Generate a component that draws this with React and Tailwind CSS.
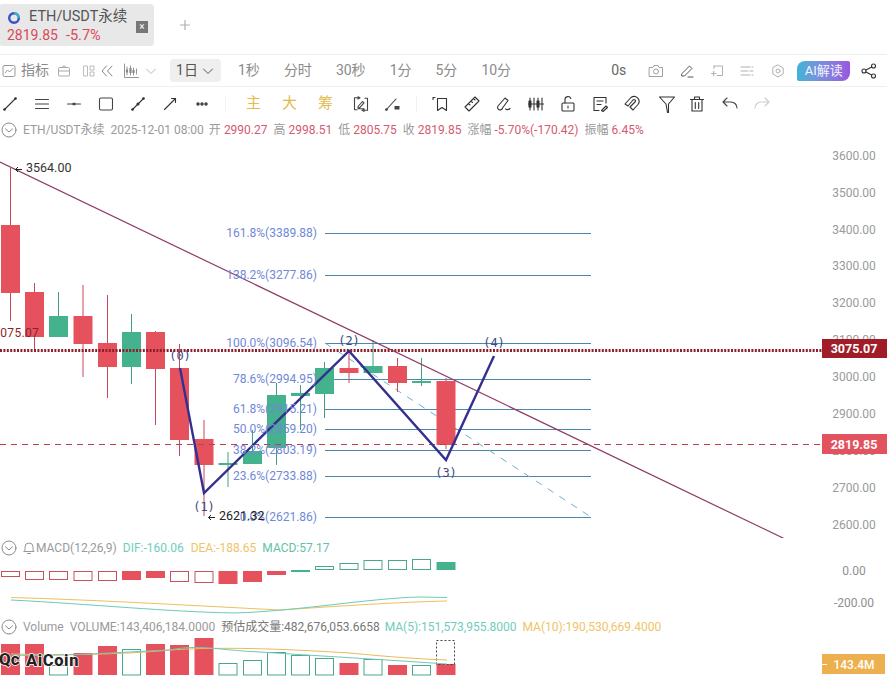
import React from "react";

const RED = "#e5525d";
const GREEN = "#44b28c";
const font = { fontFamily: "Roboto, 'Noto Sans CJK SC', sans-serif" };

const candles = [
  [10.5, 225, 293, 168, 321, "r"],
  [34.5, 292, 337, 283, 351, "r"],
  [58.5, 316, 337, 292, 337, "g"],
  [83, 316, 344, 285, 377, "r"],
  [107.5, 343, 367, 295, 398, "r"],
  [131.5, 332, 367, 314, 384, "g"],
  [155.5, 332, 369, 331, 425, "r"],
  [179.5, 368, 440, 344, 456, "r"],
  [204, 439, 465, 420, 516, "r"],
  [228, 463, 465, 452, 487, "g"],
  [252.5, 451, 464, 430, 464, "g"],
  [276.5, 395, 448, 383, 465, "g"],
  [300.5, 393, 396, 385, 430, "g"],
  [324.5, 368, 394, 362, 418, "g"],
  [349, 368, 373, 350, 383, "r"],
  [373, 366, 373, 340, 373, "g"],
  [397.5, 366, 383, 358, 392, "r"],
  [421.5, 381, 383, 358, 386, "g"],
  [446, 381, 445, 378, 449, "r"],
];

const fibs = [
  ["161.8%(3389.88)", 233],
  ["138.2%(3277.86)", 275],
  ["100.0%(3096.54)", 343],
  ["78.6%(2994.95)", 379],
  ["61.8%(2915.21)", 409],
  ["50.0%(2859.20)", 429],
  ["38.2%(2803.19)", 450],
  ["23.6%(2733.88)", 476],
  ["0.0%(2621.86)", 517],
];

const axis = [
  ["3600.00", 156], ["3500.00", 193], ["3400.00", 230], ["3300.00", 266], ["3200.00", 303],
  ["3100.00", 340], ["3000.00", 377], ["2900.00", 414], ["2800.00", 451], ["2700.00", 488], ["2600.00", 525],
];

const macd = [
  [571, 577, 0], [571, 580, 0], [571, 580, 0], [571, 581, 0], [571, 581, 0], [571, 580, 1], [571, 578, 1],
  [571, 582, 0], [571, 583, 0], [571, 584, 1], [571, 582, 1], [571, 575, 1], [570, 572, 1],
  [566, 570, 0], [563, 570, 0], [560, 570, 0], [560, 570, 0], [559, 570, 0], [562, 570, 1],
];

const vol = [
  [644, "r"], [644, "r"], [665, "g"], [653, "r"], [646, "r"], [649, "g"], [644, "r"], [645, "r"], [638, "r"],
  [663, "g"], [660, "g"], [652, "g"], [655, "g"], [658, "g"], [663, "r"], [659, "g"], [665, "r"], [665, "g"], [664, "r"],
];

const Ic = ({ children, w = 18, h = 18, vb = "0 0 18 18", color = "#444", sw = 1.1, className = "" }) => (
  <svg width={w} height={h} viewBox={vb} fill="none" stroke={color} strokeWidth={sw} strokeLinecap="round" strokeLinejoin="round" className={`shrink-0 ${className}`}>
    {children}
  </svg>
);

const Chevron = ({ color = "#aaa" }) => (
  <Ic w={14} h={14} vb="0 0 14 14" color={color} sw={1}><path d="M2.5 5 7 9.5 11.5 5" /></Ic>
);

const Collapse = () => (
  <Ic w={16} h={16} vb="0 0 16 16" color="#8a8a8a" sw={1}>
    <circle cx="8" cy="8" r="7" />
    <path d="M4.5 6.8 8 10l3.5-3.2" />
  </Ic>
);

function MainChart() {
  return (
    <svg width="887" height="398" viewBox="0 140 887 398" className="block" style={font}>
      {fibs.map(([t, y]) => (
        <line key={t} x1="325" x2="591" y1={y + 0.5} y2={y + 0.5} stroke="#4a86b4" strokeWidth="1" />
      ))}
      <line x1="325" y1="343" x2="591" y2="517" stroke="#6fb0c6" strokeWidth="1" strokeDasharray="7 7" />
      {candles.map(([x, t, b, hi, lo, c], i) => {
        const col = c === "r" ? RED : GREEN;
        const wick = c === "r" ? "#c9485a" : "#3f9f80";
        return (
          <g key={i}>
            <line x1={x} x2={x} y1={hi} y2={lo} stroke={wick} strokeWidth="1" />
            <rect x={x - 9.5} y={t} width="19" height={b - t} fill={col} />
          </g>
        );
      })}
      <line x1="0" x2="822" y1="444.5" y2="444.5" stroke="#b8404f" strokeWidth="1" strokeDasharray="6 5" />
      <line x1="0" x2="822" y1="350.5" y2="350.5" stroke="#8f1f2b" strokeWidth="3" strokeDasharray="2 1.4" />
      <line x1="0" y1="162" x2="785" y2="539" stroke="#8f3a66" strokeWidth="1.2" />
      <polyline points="180,368 204,493 349,351 446,460 494,356" fill="none" stroke="#34308f" strokeWidth="2.4" />
      {fibs.map(([t, y]) => (
        <text key={t} x="317" y={y + 4} textAnchor="end" fontSize="12" fill="#7088d8">{t}</text>
      ))}
      {[["(0)", 180, 360], ["(1)", 204, 511], ["(2)", 349, 345], ["(3)", 446, 477], ["(4)", 494, 347]].map(([t, x, y]) => (
        <text key={t} x={x} y={y} textAnchor="middle" fontSize="12" fill="#3d4a80" style={{ fontFamily: "'DejaVu Sans Mono', monospace" }}>{t}</text>
      ))}
      <text x="39" y="337" textAnchor="end" fontSize="12" fill="#8f1f2b" style={{ letterSpacing: "0.3px" }}>3075.07</text>
      <path d="M22 169.500H15.500M18 167l-2.500 2.500L18 172" fill="none" stroke="#222" strokeWidth="1" />
      <text x="26" y="172" fontSize="12.500" fill="#333">3564.00</text>
      <path d="M215 517.500H208.500M211 515l-2.500 2.500L211 520" fill="none" stroke="#222" strokeWidth="1" />
      <text x="219" y="520" fontSize="12.500" fill="#222">2621.32</text>
      {axis.map(([t, y]) => (
        <text key={t} x="854" y={y + 4} textAnchor="middle" fontSize="12" fill="#9a9a9a">{t}</text>
      ))}
      <rect x="822" y="339" width="65" height="19" fill="#a01c26" />
      <text x="854" y="353" textAnchor="middle" fontSize="12.500" fontWeight="700" fill="#fff">3075.07</text>
      <rect x="822" y="434" width="65" height="20" fill="#e2525f" />
      <text x="854" y="449" textAnchor="middle" fontSize="12.500" fontWeight="700" fill="#fff">2819.85</text>
    </svg>
  );
}

function MacdChart() {
  return (
    <svg width="887" height="60" viewBox="0 558 887 60" className="block" style={font}>
      {macd.map(([t, b, fill], i) => {
        const x = candles[i][0];
        const col = i < 12 ? "#c9505f" : "#4aa88a";
        const solid = i < 12 ? RED : GREEN;
        return fill ? (
          <rect key={i} x={x - 9.500} y={t} width="19" height={b - t} fill={solid} />
        ) : (
          <rect key={i} x={x - 9} y={t + 0.5} width="18" height={b - t - 1} fill="none" stroke={col} strokeWidth="1" />
        );
      })}
      <path d="M11 597.500C100 600 200 606 280 610C340 606 400 602 447 601" fill="none" stroke="#edc05e" strokeWidth="1" />
      <path d="M11 600C90 604 170 612 235 613C300 611 370 598 420 597L447 597.500" fill="none" stroke="#6ec9b8" strokeWidth="1" />
      <text x="854" y="575" textAnchor="middle" fontSize="12" fill="#8f8f8f">0.00</text>
      <text x="854" y="607" textAnchor="middle" fontSize="12" fill="#8f8f8f">-200.00</text>
    </svg>
  );
}

function VolChart() {
  return (
    <svg width="887" height="48" viewBox="0 636 887 48" className="block" style={font}>
      {vol.map(([t, c], i) => {
        const x = candles[i][0];
        return c === "r" ? (
          <rect key={i} x={x - 9.500} y={t} width="19" height={675 - t} fill={RED} />
        ) : (
          <rect key={i} x={x - 9} y={t + 0.5} width="18" height={674.500 - t} fill="none" stroke="#4aa88a" strokeWidth="1" />
        );
      })}
      <rect x="436.500" y="640.500" width="18" height="24" fill="none" stroke="#444" strokeWidth="1" strokeDasharray="2 2" />
      <path d="M11 654C60 655 120 655 170 650C230 646 300 650 350 653C390 657 420 659 447 660" fill="none" stroke="#edb85a" strokeWidth="1" />
      <path d="M11 655C60 657 120 652 170 650C200 644 215 650 260 652C320 656 390 660 447 664" fill="none" stroke="#6ec9b8" strokeWidth="1" />
      <g fontWeight="800" fill="#222" stroke="#fff" strokeWidth="1.500" style={{ paintOrder: "stroke" }}>
        <text x="-1" y="665" fontSize="17">Qc</text>
        <text x="26" y="666" fontSize="16.500" style={{ letterSpacing: "0.6px" }}>AiCoin</text>
      </g>
      <rect x="822" y="654" width="63" height="20" fill="#edb04e" />
      <line x1="822" x2="827" y1="664.500" y2="664.500" stroke="#fff" />
      <text x="854" y="669" textAnchor="middle" fontSize="12" fontWeight="500" fill="#fff">143.4M</text>
    </svg>
  );
}

export default function App() {
  return (
    <div className="w-[887px] h-[684px] overflow-hidden bg-white" style={font}>
      {/* tabs */}
      <div className="h-[55px] border-b border-[#efefef] flex items-start pt-[4px]">
        <div className="w-[154px] h-[42px] bg-[#e8e8e8] rounded-r-[4px] rounded-l-[2px] pl-[7px] pr-[6px] flex items-end justify-between pb-[1px]">
          <div className="flex flex-col h-full justify-between pt-[5px]">
            <div className="flex items-center gap-[8px] h-[18px]">
              <svg width="14" height="14" viewBox="0 0 14 14" fill="none" className="shrink-0">
                <circle cx="7" cy="7" r="4.800" stroke="#3a50c8" strokeWidth="2.400" />
                <path d="M7 2.200A4.800 4.800 0 0 1 11.800 7" stroke="#38b6c8" strokeWidth="2.400" />
              </svg>
              <span className="text-[14.500px] leading-none text-[#555] whitespace-nowrap">ETH/USDT永续</span>
            </div>
            <div className="flex gap-[8px] text-[14px] leading-[19px] text-[#d9495a] whitespace-nowrap">
              <span>2819.85</span>
              <span className="text-[14.500px]">-5.7%</span>
            </div>
          </div>
          <div className="w-[12px] h-[12px] mb-[12px] bg-[#777] flex items-center justify-center text-white text-[10px] leading-none">×</div>
        </div>
        <svg width="12" height="12" viewBox="0 0 12 12" className="ml-[25px] mt-[15px]" stroke="#b0b0b0" strokeWidth="1.200">
          <path d="M6 1v10M1 6h10" />
        </svg>
      </div>

      {/* toolbar 1 */}
      <div className="h-[32px] border-b border-[#f0f0f0] flex items-center text-[14px] text-[#8a8a8a] whitespace-nowrap">
        <Ic w={14} h={14} vb="0 0 14 14" color="#999" sw={1} className="ml-[2px]">
          <rect x="1" y="1.500" width="12" height="11" rx="1.500" />
          <path d="M3 9l2.500-3 2 2L11 4.500" />
        </Ic>
        <span className="ml-[5px] w-[27px]">指标</span>
        <Ic w={14} h={14} vb="0 0 14 14" color="#aaa" sw={1} className="ml-[9px]">
          <rect x="1.500" y="3.500" width="11" height="8.500" rx="1" /><path d="M1.500 7h11M5 3.500c0-2 4-2 4 0" />
        </Ic>
        <Ic w={12} h={14} vb="0 0 12 14" color="#bbb" sw={1} className="ml-[12px]">
          <rect x="1" y="2" width="3.500" height="10" /><rect x="7.500" y="2" width="3.500" height="4" /><rect x="7.500" y="8" width="3.500" height="4" />
        </Ic>
        <Ic w={14} h={14} vb="0 0 14 14" color="#888" sw={1} className="ml-[5px]">
          <path d="M6.500 2 2 7l4.500 5M12 2 7.500 7l4.500 5" />
        </Ic>
        <Ic w={16} h={16} vb="0 0 16 16" color="#888" sw={0.9} className="ml-[9px]">
          <path d="M1.500 1v13.500h14M4 4v8M7.500 3v9M10.500 5v7M13.500 6v5" />
          <path d="M4 6.500v3M7.500 5v5M10.500 7v3" strokeWidth="2.200" strokeLinecap="butt" />
        </Ic>
        <span className="ml-[5px]"><Chevron color="#bbb" /></span>
        <div className="ml-[12px] w-[51px] h-[23px] rounded-[4px] bg-[#efefef] flex items-center justify-center gap-[3px] text-[#555]">
          <span>1日</span><Chevron color="#555" />
        </div>
        <span className="ml-[17px]">1秒</span>
        <span className="ml-[24px]">分时</span>
        <span className="ml-[24px]">30秒</span>
        <span className="ml-[24px]">1分</span>
        <span className="ml-[24px]">5分</span>
        <span className="ml-[24px]">10分</span>
        <span className="ml-[100px] text-[#666]">0s</span>
        <Ic w={16} h={16} vb="0 0 16 16" color="#a0a0a0" sw={1} className="ml-[22px]">
          <path d="M1.500 4.500h3.500l1-2h4l1 2h3.500v9h-13z" /><circle cx="8" cy="8.500" r="2.500" />
        </Ic>
        <Ic w={16} h={16} vb="0 0 16 16" color="#555" sw={1} className="ml-[15px]">
          <path d="M3 10.500 10.500 3l2.500 2.500L5.500 13H3zM9 14h5" />
        </Ic>
        <Ic w={16} h={16} vb="0 0 16 16" color="#b0b0b0" sw={1} className="ml-[14px]">
          <path d="M5 3h8.500v9.500H8M5 3v2.500M2.500 10.500h4.500M4.700 8.300v4.400" />
        </Ic>
        <Ic w={14} h={14} vb="0 0 14 14" color="#b0b0b0" sw={1} className="ml-[15px]">
          <path d="M1 3h9M12 3h1M1 7h7M10 7h3M1 11h9M12 11h1" />
        </Ic>
        <Ic w={14} h={14} vb="0 0 14 14" color="#b0b0b0" sw={1} className="ml-[17px]">
          <path d="M7 1l5.200 3v6L7 13l-5.200-3V4z" /><circle cx="7" cy="7" r="2" />
        </Ic>
        <div className="ml-[12px] w-[53px] h-[20px] rounded-tl-[8px] rounded-br-[8px] rounded-tr-[2px] rounded-bl-[2px] bg-gradient-to-r from-[#3bb3d6] to-[#9a55e0] flex items-center justify-center text-[#f4f4ff] text-[13px]">
          AI解读
        </div>
        <Ic w={16} h={16} vb="0 0 16 16" color="#333" sw={1.100} className="ml-[11px]">
          <circle cx="12.500" cy="3" r="2" /><circle cx="12.500" cy="13" r="2" /><circle cx="3" cy="8" r="2" /><path d="M5 7l5.700-3M5 9l5.700 3" />
        </Ic>
      </div>

      {/* toolbar 2 */}
      <div className="h-[33px] flex items-center pl-[1px] text-[#222]">
        <div className="flex items-center gap-[14px]">
          <Ic color="#333"><path d="M3.500 14.500 14.500 3.500" /><circle cx="3.500" cy="14.500" r="0.800" fill="#333" /><circle cx="14.500" cy="3.500" r="0.800" fill="#333" /></Ic>
          <Ic color="#444"><path d="M2.500 4.500h13M2.500 9h13M2.500 13.500h13" /></Ic>
          <Ic color="#444"><path d="M2.500 9h13" /><path d="M7.500 9h3" strokeWidth="2.400" strokeLinecap="butt" /></Ic>
          <Ic color="#444"><rect x="2.500" y="3" width="13" height="12" rx="1.500" /></Ic>
          <Ic color="#333"><path d="M3.500 14.500 14.500 3.500" /><circle cx="9" cy="9" r="1" fill="#333" /><circle cx="3.500" cy="14.500" r="0.800" fill="#333" /><circle cx="14.500" cy="3.500" r="0.800" fill="#333" /></Ic>
          <Ic color="#333"><path d="M3.500 14.500 14.500 3.500M10.500 3.500h4v4" /></Ic>
          <Ic color="#444"><circle cx="5" cy="9" r="1.200" fill="#444" /><circle cx="9" cy="9" r="1.200" fill="#444" /><circle cx="13" cy="9" r="1.200" fill="#444" /></Ic>
        </div>
        <div className="w-px h-[16px] bg-[#f2f2f2] ml-[14px]" />
        <div className="flex items-center gap-[21px] ml-[20px] text-[15px] leading-none text-[#e3ba4e]">
          <span>主</span>
          <span>大</span>
          <span>筹</span>
        </div>
        <Ic color="#444" className="ml-[19px]">
          <path d="M6 2.800H2.500v12H5M12 15.200h3.500v-12H13M6 1.800l2 1-2 1.200zM12 14.200l-2 1 2 1.200z" /><path d="M6 11.500l4.500-5 1.500 1.300-4.500 5H6zM6 13.800h6" />
        </Ic>
        <Ic color="#444" className="ml-[14px]">
          <path d="M2 15 12 4" /><circle cx="2.500" cy="14.500" r="0.800" fill="#444" /><rect x="10.500" y="11" width="5" height="3.500" fill="#444" stroke="none" />
        </Ic>
        <div className="w-px h-[16px] bg-[#f2f2f2] ml-[14px]" />
        <div className="flex items-center gap-[14px] ml-[14px]">
          <Ic color="#333"><path d="M2 2.500h2M2 2.500v2M6.500 3.500h9v12l-4.500-3-4.500 3z" /></Ic>
          <Ic color="#333"><path d="M2 12 12 2l4 4L6 16zM5.500 8.500l1.500 1.500M8 6l1.500 1.500M10.500 3.500 12 5" /></Ic>
          <Ic color="#333"><path d="M3 11 10 3l3 2.500-5.500 7.500a2.500 2.500 0 1 1-4.500-2z" /><path d="M10.500 14c1.500 1 3 1 4.500-.5" /></Ic>
          <Ic color="#333"><path d="M3 3v12M7 3v12M11 3v12M15 3v12M1.500 9h15" /><rect x="2" y="6" width="2" height="6" fill="#333" /><rect x="10" y="6" width="2" height="6" fill="#333" /></Ic>
          <Ic color="#333"><rect x="3" y="8" width="12" height="8" rx="1" /><path d="M6 8V4.500a3 3 0 0 1 5.800-1M9 11v2" /></Ic>
          <Ic color="#333"><path d="M15 8V2.500H3v13h5M6 6h6M6 9.500h4M10.500 15.500 15 11l1.500 1.500-4.500 4z" /></Ic>
          <Ic color="#333"><path d="M2 9l6-6.500a5 5 0 0 1 7 7L10 15l-3-3 5-5a1 1 0 0 0-2-2L5 11z" /></Ic>
        </div>
        <Ic w={20} h={20} vb="0 0 20 20" color="#333" className="ml-[16px]">
          <path d="M2.500 3h15l-6 7v8.500h-1L9 10z" />
        </Ic>
        <Ic color="#333" className="ml-[11px]"><path d="M2.500 4.500h13M6.500 4.500V2h5v2.500M4 4.500V16h10V4.500M7.300 7.500v6M10.700 7.500v6" /></Ic>
        <Ic color="#444" className="ml-[15px]"><path d="M6 3 2 7l4 4M2 7h8a6 6 0 0 1 6 6" /></Ic>
        <Ic color="#ccc" className="ml-[14px]"><path d="M12 3l4 4-4 4M16 7H8a6 6 0 0 0-6 6" /></Ic>
      </div>

      {/* legend */}
      <div className="h-[20px] flex items-center pl-[1px] text-[12px] leading-none text-[#9a9a9a] whitespace-nowrap">
        <Collapse />
        <span className="ml-[6px]">ETH/USDT永续</span>
        <span className="ml-[6px]">2025-12-01 08:00</span>
        <span className="ml-[5px]">开</span>
        <span className="ml-[3px] text-[#d45a70]">2990.27</span>
        <span className="ml-[6px]">高</span>
        <span className="ml-[3px] text-[#d45a70]">2998.51</span>
        <span className="ml-[6px]">低</span>
        <span className="ml-[3px] text-[#d45a70]">2805.75</span>
        <span className="ml-[6px]">收</span>
        <span className="ml-[3px] text-[#d45a70]">2819.85</span>
        <span className="ml-[6px]">涨幅</span>
        <span className="ml-[3px] text-[#d45a70]">-5.70%(-170.42)</span>
        <span className="ml-[6px]">振幅</span>
        <span className="ml-[3px] text-[#d45a70]">6.45%</span>
      </div>

      <MainChart />

      {/* MACD legend */}
      <div className="h-[20px] flex items-center pl-[1px] text-[12px] leading-none whitespace-nowrap">
        <Collapse />
        <Ic w={14} h={14} vb="0 0 14 14" color="#999" sw={1} className="ml-[5px]">
          <path d="M2 10.500h10L11 9V6a4 4 0 0 0-8 0v3zM5.500 12.500h3" />
        </Ic>
        <span className="text-[#9a9a9a]">MACD(12,26,9)</span>
        <span className="ml-[6px] text-[#6fcdbb]">DIF:-160.06</span>
        <span className="ml-[7px] text-[#efc468]">DEA:-188.65</span>
        <span className="ml-[6px] text-[#62c2a4]">MACD:57.17</span>
      </div>
      <MacdChart />

      {/* Volume legend */}
      <div className="h-[18px] flex items-center pl-[1px] text-[12px] leading-none whitespace-nowrap">
        <Collapse />
        <span className="ml-[6px] text-[#9a9a9a]">Volume</span>
        <span className="ml-[6px] text-[#9a9a9a]">VOLUME:143,406,184.0000</span>
        <span className="ml-[6px] text-[#777]">预估成交量:482,676,053.6658</span>
        <span className="ml-[5px] text-[#6fcdbb]">MA(5):151,573,955.8000</span>
        <span className="ml-[6px] text-[#efc468]">MA(10):190,530,669.4000</span>
      </div>
      <VolChart />
    </div>
  );
}
